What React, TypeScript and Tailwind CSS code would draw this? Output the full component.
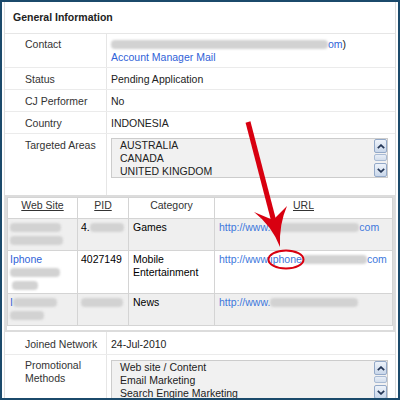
import type { ReactNode } from 'react'

const LINK = 'text-[#2f62d8]'
const URL_LINK = 'text-[#4077dc]'

function Blur({ className }: { className: string }) {
  return (
    <span
      className={`inline-block h-[9px] rounded-[4px] bg-[#d2d2d2] align-[-1px] blur-[1.2px] ${className}`}
    />
  )
}

function ScrollBtn({ dir }: { dir: 'up' | 'down' }) {
  return (
    <div className="flex h-[14px] w-[13px] items-center justify-center rounded-[2px] border border-[#93a9c8] bg-linear-to-b from-[#eef3fa] to-[#c9d7ea]">
      <svg width="8" height="5" viewBox="0 0 8 5">
        <path
          d={dir === 'up' ? 'M0.8 4.2L4 1.1L7.2 4.2' : 'M0.8 0.8L4 3.9L7.2 0.8'}
          fill="none"
          stroke="#253756"
          strokeWidth="1.7"
        />
      </svg>
    </div>
  )
}

function ListBox({ items, className }: { items: string[]; className: string }) {
  return (
    <div className={`flex h-[40px] w-[277px] border border-[#cccccc] bg-[#f1f1f1] ${className}`}>
      <div className="flex-1 pl-[8px] text-[#222]">
        {items.map((item) => (
          <div key={item}>{item}</div>
        ))}
      </div>
      <div className="flex w-[13px] flex-col">
        <ScrollBtn dir="up" />
        <div className="mt-px h-[7px] rounded-[2px] border border-[#a9bbd4] bg-linear-to-b from-[#e8eef7] to-[#d3deec]" />
        <div className="flex-1" />
        <ScrollBtn dir="down" />
      </div>
    </div>
  )
}

interface InfoRowProps {
  label: ReactNode
  height: string
  labelPad?: string
  valueClass?: string
  border?: boolean
  children: ReactNode
}

function InfoRow({ label, height, labelPad = 'pt-[5px]', valueClass = 'pt-[5px]', border = true, children }: InfoRowProps) {
  return (
    <div className={`flex ${height} ${border ? 'border-b border-[#ebebeb]' : ''}`}>
      <div className={`w-[102px] shrink-0 border-r border-[#e6e6e6] pl-[20px] text-[#333] ${labelPad}`}>{label}</div>
      <div className={`flex-1 pl-[4px] text-[#222] ${valueClass}`}>{children}</div>
    </div>
  )
}

function SitesTable() {
  const head = 'bg-white pt-[1px] text-center text-[#333]'
  return (
    <div className="border-2 border-[#dcdcdc] pb-[4px]">
      <div className="grid grid-cols-[69px_50px_85px_1fr] grid-rows-[20px_31px_42px_31px] gap-px bg-[#d4d4d4] p-px">
        <div className={head}><span className="underline">Web Site</span></div>
        <div className={head}><span className="underline">PID</span></div>
        <div className={head}>Category</div>
        <div className={head}><span className="underline">URL</span></div>

        {/* row 1 */}
        <div className="bg-[#efefef] pl-[2px] pt-[2px]">
          <div><Blur className="w-[51px]" /></div>
          <div><Blur className="w-[53px]" /></div>
        </div>
        <div className="bg-[#efefef] pl-[3px] pt-[2px]">
          4.<Blur className="w-[34px]" />
        </div>
        <div className="bg-[#efefef] pl-[4px] pt-[2px]">Games</div>
        <div className={`bg-[#efefef] pl-[4px] pt-[2px] ${URL_LINK}`}>
          http://www.<Blur className="w-[89px]" />com
        </div>

        {/* row 2 */}
        <div className="bg-white pl-[2px] pt-[2px]">
          <div className={LINK}>Iphone</div>
          <div><Blur className="w-[50px]" /></div>
          <div className="pl-[2px]"><Blur className="w-[26px]" /></div>
        </div>
        <div className="bg-white pl-[3px] pt-[2px]">4027149</div>
        <div className="bg-white pl-[4px] pt-[2px]">
          <div>Mobile</div>
          <div>Entertainment</div>
        </div>
        <div className={`bg-white pl-[4px] pt-[2px] ${URL_LINK}`}>
          http://www.iphone<Blur className="w-[65px]" />com
        </div>

        {/* row 3 */}
        <div className="bg-[#efefef] pl-[2px] pt-[2px]">
          <div><span className={LINK}>I</span><Blur className="w-[44px]" /></div>
          <div><Blur className="w-[34px]" /></div>
        </div>
        <div className="bg-[#efefef] pl-[3px] pt-[2px]">
          <Blur className="w-[42px]" />
        </div>
        <div className="bg-[#efefef] pl-[4px] pt-[2px]">News</div>
        <div className={`bg-[#efefef] pl-[4px] pt-[2px] ${URL_LINK}`}>
          http://www.<Blur className="w-[88px]" />
        </div>
      </div>
    </div>
  )
}

export default function App() {
  return (
    <div className="relative h-[400px] w-[400px] overflow-hidden font-['Liberation_Sans',Arial,sans-serif] text-[10.5px] leading-[13px]">
      <div className="h-full w-full overflow-hidden border-2 border-[#1b4a6b] bg-white">
        <div className="mx-[2px] h-full border-x border-[#dddddd]">
          <div className="flex h-[32px] items-center border-b border-[#e6e6e6] pl-[8px] font-bold text-[#222]">
            General Information
          </div>

          <InfoRow label="Contact" height="h-[34px]" labelPad="pt-[4px]" valueClass="pt-[4px]">
            <div>
              <Blur className="w-[217px]" />
              <span className={LINK}>om</span>)
            </div>
            <div className={LINK}>Account Manager Mail</div>
          </InfoRow>
          <InfoRow label="Status" height="h-[22px]">Pending Application</InfoRow>
          <InfoRow label="CJ Performer" height="h-[22px]">No</InfoRow>
          <InfoRow label="Country" height="h-[22px]">INDONESIA</InfoRow>
          <InfoRow label="Targeted Areas" height="h-[61px]" valueClass="pt-0" border={false}>
            <ListBox className="mt-[4px]" items={['AUSTRALIA', 'CANADA', 'UNITED KINGDOM']} />
          </InfoRow>

          <SitesTable />

          <InfoRow label="Joined Network" height="h-[23px]" labelPad="pt-[6px]" valueClass="pt-[6px]">
            24-Jul-2010
          </InfoRow>
          <InfoRow label={<>Promotional<br />Methods</>} height="h-[60px]" labelPad="pt-[4px]" valueClass="pt-0" border={false}>
            <ListBox className="mt-[5px]" items={['Web site / Content', 'Email Marketing', 'Search Engine Marketing']} />
          </InfoRow>
        </div>
      </div>

      <svg className="pointer-events-none absolute left-0 top-0" width="400" height="400" viewBox="0 0 400 400">
        <line x1="248" y1="122" x2="274" y2="222" stroke="#d80010" strokeWidth="5" />
        <path d="M280 247 Q272 226 254 212 L273 220 L287 206 Q279 224 280 247 Z" fill="#d80010" />
        <ellipse cx="286" cy="259.5" rx="17.5" ry="9" fill="none" stroke="#d80010" strokeWidth="2" />
      </svg>
    </div>
  )
}
